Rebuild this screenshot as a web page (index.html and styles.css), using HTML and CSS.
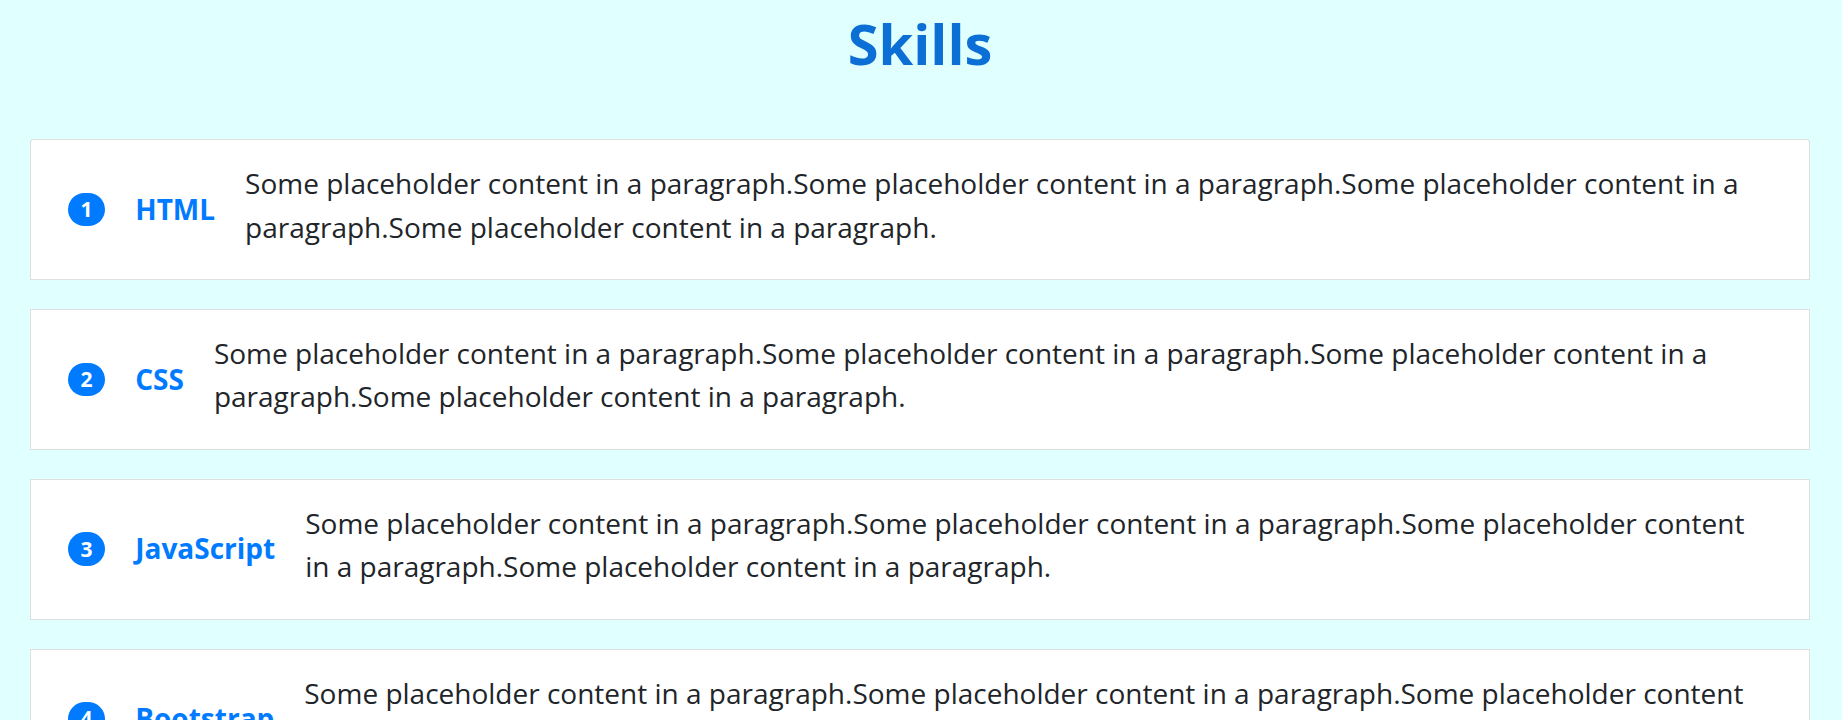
FILE: index.html
```html
<!DOCTYPE html>
<html lang="en">
<head>
<meta charset="utf-8">
<title>Skills</title>
<link rel="stylesheet" href="styles.css">
</head>
<body>
<main class="page">
  <h1 class="title">Skills</h1>
  <ul class="skills">
    <li class="skill">
      <span class="badge">1</span>
      <h4 class="skill-name">HTML</h4>
      <p class="skill-text">Some placeholder content in a paragraph.Some placeholder content in a paragraph.Some placeholder content in a paragraph.Some placeholder content in a paragraph.</p>
    </li>
    <li class="skill">
      <span class="badge">2</span>
      <h4 class="skill-name">CSS</h4>
      <p class="skill-text">Some placeholder content in a paragraph.Some placeholder content in a paragraph.Some placeholder content in a paragraph.Some placeholder content in a paragraph.</p>
    </li>
    <li class="skill">
      <span class="badge">3</span>
      <h4 class="skill-name">JavaScript</h4>
      <p class="skill-text">Some placeholder content in a paragraph.Some placeholder content in a paragraph.Some placeholder content in a paragraph.Some placeholder content in a paragraph.</p>
    </li>
    <li class="skill">
      <span class="badge">4</span>
      <h4 class="skill-name">Bootstrap</h4>
      <p class="skill-text">Some placeholder content in a paragraph.Some placeholder content in a paragraph.Some placeholder content in a paragraph.Some placeholder content in a paragraph.</p>
    </li>
  </ul>
</main>
</body>
</html>
```

FILE: styles.css
```css
html, body {
  margin: 0;
  padding: 0;
}

body {
  background: #e0ffff;
  color: #212529;
  font-family: "Open Sans", "Liberation Sans", sans-serif;
}

.page {
  padding: 10px 32px 0 30px;
}

.title {
  margin: 0 0 62px;
  text-align: center;
  font-size: 56px;
  line-height: 1.2;
  font-weight: 700;
  color: #0b6fd6;
}

.skills {
  list-style: none;
  margin: 0;
  padding: 0;
  display: flex;
  flex-direction: column;
  gap: 29px;
}

.skill {
  display: flex;
  align-items: center;
  gap: 30px;
  background: #fff;
  border: 1px solid rgba(0, 0, 0, 0.125);
  padding: 26px 37px;
}

.skill:first-child {
  border-top-left-radius: 4px;
  border-top-right-radius: 4px;
}

.skill:last-child {
  border-bottom-left-radius: 4px;
  border-bottom-right-radius: 4px;
}

.badge {
  flex: none;
  background: #007bff;
  color: #fff;
  font-size: 21px;
  font-weight: 700;
  line-height: 1;
  padding: 0.3em 0.6em;
  border-radius: 10rem;
}

.skill-name {
  flex: none;
  margin: 0;
  font-size: 28px;
  font-weight: 700;
  line-height: 1.2;
  color: #007bff;
  white-space: nowrap;
}

.skill-text {
  flex: 1;
  margin: -4px 0 4px;
  font-size: 28px;
  line-height: 1.55;
}
```
